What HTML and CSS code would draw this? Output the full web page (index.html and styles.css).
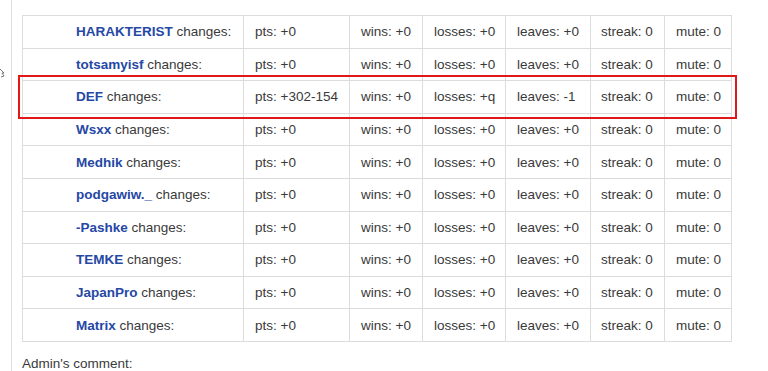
FILE: index.html
```html
<!DOCTYPE html>
<html>
<head>
<meta charset="utf-8">
<link rel="stylesheet" href="styles.css">
</head>
<body>
<svg class="edge-icon" width="6" height="10" viewBox="0 0 6 10"><path d="M0 1 L4 5 L2 5 L4 8 L1 9" fill="none" stroke="#777" stroke-width="1"/></svg>
<div class="panel">
  <table class="changes">
    <tr><td class="name"><b>HARAKTERIST</b> changes:</td><td>pts: +0</td><td>wins: +0</td><td>losses: +0</td><td>leaves: +0</td><td>streak: 0</td><td>mute: 0</td></tr>
    <tr><td class="name"><b>totsamyisf</b> changes:</td><td>pts: +0</td><td>wins: +0</td><td>losses: +0</td><td>leaves: +0</td><td>streak: 0</td><td>mute: 0</td></tr>
    <tr class="hl"><td class="name"><b>DEF</b> changes:</td><td>pts: +302-154</td><td>wins: +0</td><td>losses: +q</td><td>leaves: -1</td><td>streak: 0</td><td>mute: 0</td></tr>
    <tr><td class="name"><b>Wsxx</b> changes:</td><td>pts: +0</td><td>wins: +0</td><td>losses: +0</td><td>leaves: +0</td><td>streak: 0</td><td>mute: 0</td></tr>
    <tr><td class="name"><b>Medhik</b> changes:</td><td>pts: +0</td><td>wins: +0</td><td>losses: +0</td><td>leaves: +0</td><td>streak: 0</td><td>mute: 0</td></tr>
    <tr><td class="name"><b>podgawiw._</b> changes:</td><td>pts: +0</td><td>wins: +0</td><td>losses: +0</td><td>leaves: +0</td><td>streak: 0</td><td>mute: 0</td></tr>
    <tr><td class="name"><b>-Pashke</b> changes:</td><td>pts: +0</td><td>wins: +0</td><td>losses: +0</td><td>leaves: +0</td><td>streak: 0</td><td>mute: 0</td></tr>
    <tr><td class="name"><b>TEMKE</b> changes:</td><td>pts: +0</td><td>wins: +0</td><td>losses: +0</td><td>leaves: +0</td><td>streak: 0</td><td>mute: 0</td></tr>
    <tr><td class="name"><b>JapanPro</b> changes:</td><td>pts: +0</td><td>wins: +0</td><td>losses: +0</td><td>leaves: +0</td><td>streak: 0</td><td>mute: 0</td></tr>
    <tr><td class="name"><b>Matrix</b> changes:</td><td>pts: +0</td><td>wins: +0</td><td>losses: +0</td><td>leaves: +0</td><td>streak: 0</td><td>mute: 0</td></tr>
  </table>
  <p class="comment">Admin's comment:</p>
</div>
<div class="highlight-box"></div>
</body>
</html>
```
FILE: styles.css
```css
html, body {
  margin: 0;
  padding: 0;
  background: #fff;
  overflow: hidden;
}
body {
  font-family: "Liberation Sans", Arial, sans-serif;
  font-size: 13.5px;
  color: #3a3a3a;
  position: relative;
  height: 371px;
}
.edge-icon {
  position: absolute;
  left: 0;
  top: 68px;
}
.panel {
  margin-left: 11px;
  border-left: 1px solid #dedede;
  padding: 15px 0 0 10px;
  height: 356px;
}
.changes {
  border-collapse: collapse;
  table-layout: fixed;
  width: 709px;
}
.changes td {
  box-sizing: border-box;
  border: 1px solid #dcdcdc;
  height: 32.6px;
  padding: 0 0 0 11px;
  white-space: nowrap;
  vertical-align: middle;
}
.changes td:nth-child(1) { width: 221px; padding-left: 53px; }
.changes td:nth-child(2) { width: 106px; }
.changes td:nth-child(3) { width: 73px; }
.changes td:nth-child(4) { width: 83px; }
.changes td:nth-child(5) { width: 85px; }
.changes td:nth-child(6) { width: 74px; padding-left: 10px; }
.changes td:nth-child(7) { width: 67px; }
.changes b {
  color: #2548a5;
  font-weight: bold;
}
.comment {
  margin: 14px 0 0 0;
  color: #3a3a3a;
}
.highlight-box {
  position: absolute;
  left: 18px;
  top: 75px;
  width: 715px;
  height: 40px;
  border: 2px solid #e01818;
}
```
